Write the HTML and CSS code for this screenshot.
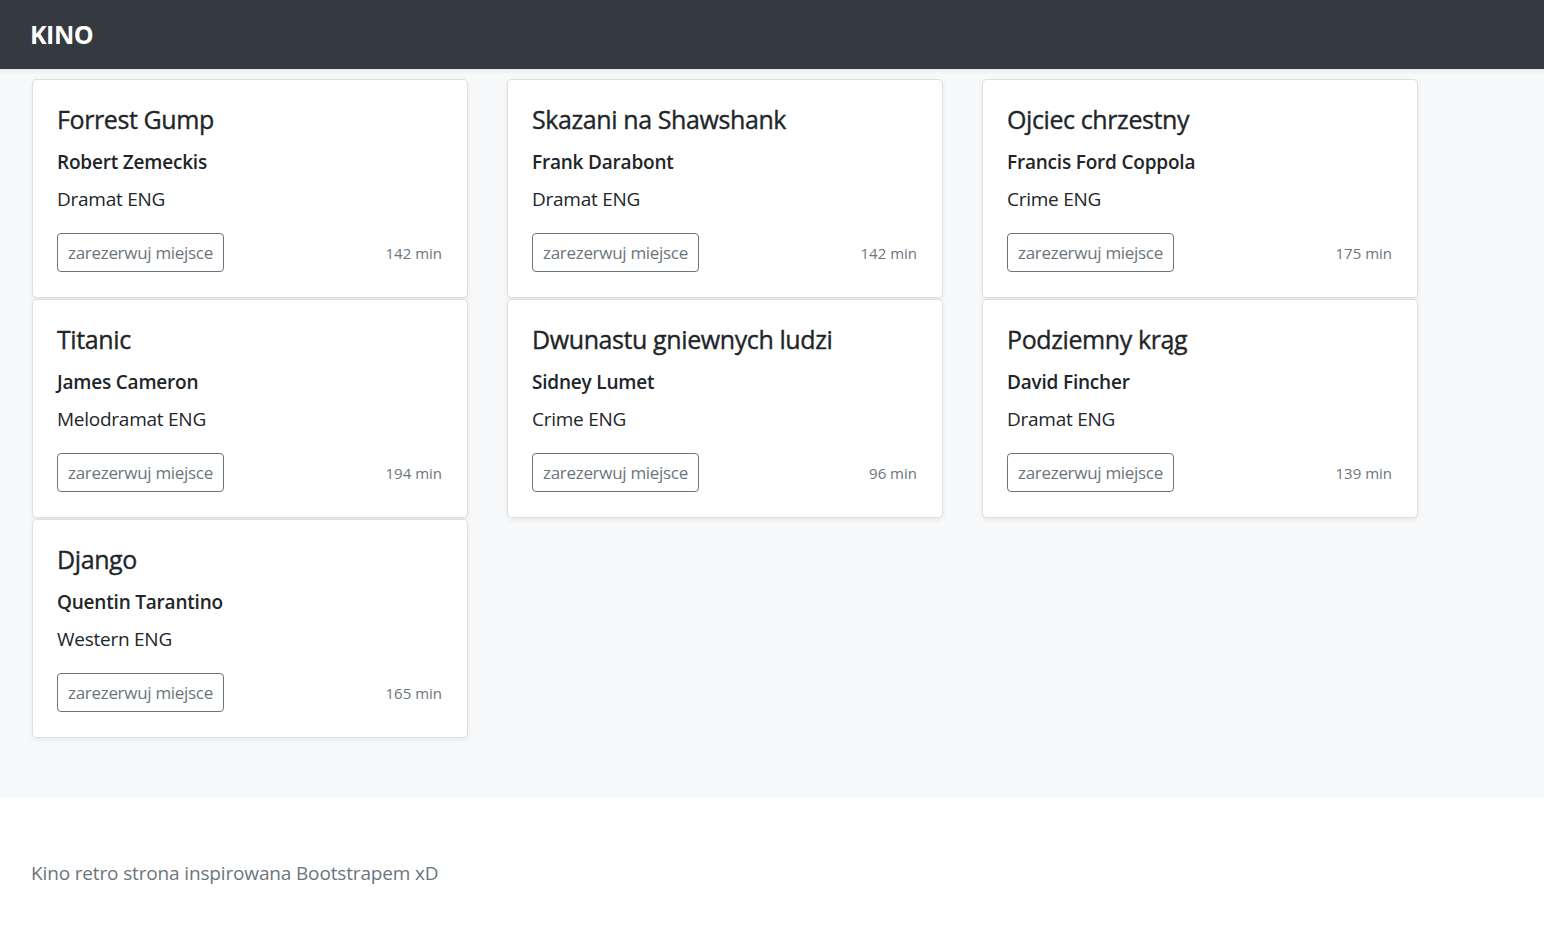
FILE: index.html
```html
<!DOCTYPE html>
<html lang="pl">
<head>
<meta charset="utf-8">
<title>Kino</title>
<link rel="stylesheet" href="styles.css">
</head>
<body>
<header class="navbar">
  <span class="brand">KINO</span>
</header>
<main class="album">
  <div class="grid">
    <div class="card">
      <h4 class="title">Forrest Gump</h4>
      <h6 class="director">Robert Zemeckis</h6>
      <p class="genre">Dramat ENG</p>
      <div class="actions"><button class="btn">zarezerwuj miejsce</button><small class="time">142 min</small></div>
    </div>
    <div class="card">
      <h4 class="title">Skazani na Shawshank</h4>
      <h6 class="director">Frank Darabont</h6>
      <p class="genre">Dramat ENG</p>
      <div class="actions"><button class="btn">zarezerwuj miejsce</button><small class="time">142 min</small></div>
    </div>
    <div class="card">
      <h4 class="title">Ojciec chrzestny</h4>
      <h6 class="director">Francis Ford Coppola</h6>
      <p class="genre">Crime ENG</p>
      <div class="actions"><button class="btn">zarezerwuj miejsce</button><small class="time">175 min</small></div>
    </div>
    <div class="card">
      <h4 class="title">Titanic</h4>
      <h6 class="director">James Cameron</h6>
      <p class="genre">Melodramat ENG</p>
      <div class="actions"><button class="btn">zarezerwuj miejsce</button><small class="time">194 min</small></div>
    </div>
    <div class="card">
      <h4 class="title">Dwunastu gniewnych ludzi</h4>
      <h6 class="director">Sidney Lumet</h6>
      <p class="genre">Crime ENG</p>
      <div class="actions"><button class="btn">zarezerwuj miejsce</button><small class="time">96 min</small></div>
    </div>
    <div class="card">
      <h4 class="title">Podziemny krąg</h4>
      <h6 class="director">David Fincher</h6>
      <p class="genre">Dramat ENG</p>
      <div class="actions"><button class="btn">zarezerwuj miejsce</button><small class="time">139 min</small></div>
    </div>
    <div class="card">
      <h4 class="title">Django</h4>
      <h6 class="director">Quentin Tarantino</h6>
      <p class="genre">Western ENG</p>
      <div class="actions"><button class="btn">zarezerwuj miejsce</button><small class="time">165 min</small></div>
    </div>
  </div>
</main>
<footer class="footer">
  <p class="footer-text">Kino retro strona inspirowana Bootstrapem xD</p>
</footer>
</body>
</html>
```
FILE: styles.css
```css
* { box-sizing: border-box; }
html, body { margin: 0; padding: 0; }
body {
  font-family: "Open Sans", "Noto Sans", sans-serif;
  color: #212529;
  background: #fff;
  font-size: 20px;
}
.navbar {
  height: 69px;
  background: #343a40;
  display: flex;
  align-items: center;
  padding-left: 30px;
  box-shadow: 0 2px 5px rgba(0,0,0,.08);
  position: relative;
}
.brand {
  color: #fff;
  font-weight: 700;
  font-size: 25px;
  line-height: 37px;
  letter-spacing: -0.5px;
}
.album {
  background: #f8f9fa;
  padding: 10px 0 60px 32px;
}
.grid {
  display: grid;
  grid-template-columns: repeat(3, 436px);
  column-gap: 39px;
  row-gap: 1px;
}
.card {
  background: #fff;
  border: 1px solid rgba(0,0,0,.125);
  border-radius: 5px;
  box-shadow: 0 2px 5px rgba(0,0,0,.075);
  padding: 24px 25px 25px 24px;
  height: 219px;
}
.title {
  margin: 0;
  font-size: 25px;
  line-height: 30px;
  font-weight: 400;
  letter-spacing: -0.4px;
  -webkit-text-stroke: 0.35px currentColor;
}
.director {
  margin: 16px 0 0;
  font-size: 19px;
  line-height: 24px;
  font-weight: 600;
  letter-spacing: -0.2px;
}
.genre {
  margin: 11px 0 0;
  font-size: 19px;
  line-height: 28px;
  letter-spacing: -0.25px;
}
.actions {
  margin-top: 20px;
  display: flex;
  justify-content: space-between;
  align-items: center;
}
.btn {
  font-family: inherit;
  height: 39px;
  padding: 0 10px;
  border: 1px solid #6c757d;
  border-radius: 4px;
  background: transparent;
  color: #6c757d;
  font-size: 17px;
  letter-spacing: -0.3px;
  line-height: 26px;
}
.time {
  color: #6c757d;
  font-size: 15px;
  letter-spacing: 0;
}
.footer {
  background: #fff;
  padding: 60px 31px 60px;
}
.footer-text {
  margin: 0;
  color: #6c757d;
  font-size: 19px;
  line-height: 30px;
  letter-spacing: -0.15px;
}
```
